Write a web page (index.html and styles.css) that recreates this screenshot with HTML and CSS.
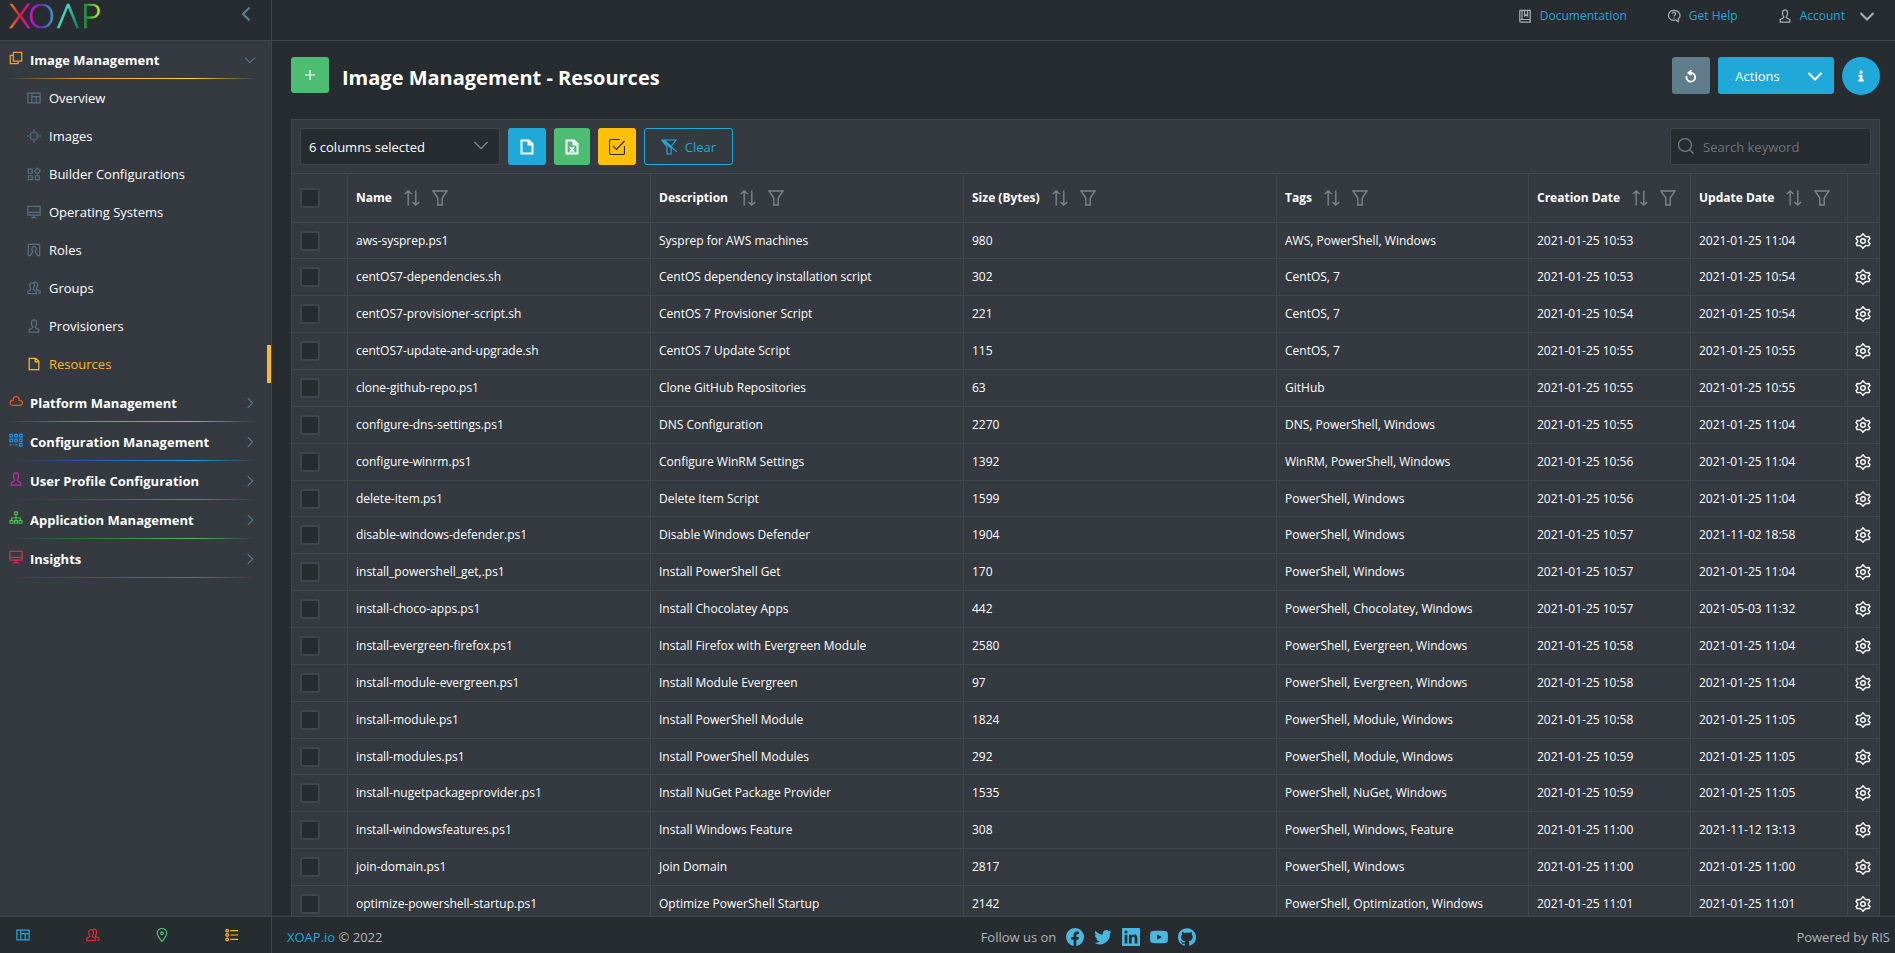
FILE: index.html
```html
<!DOCTYPE html>
<html lang="en">
<head>
	<meta charset="utf-8">
	<title>Image Management - Resources</title>
	<link rel="stylesheet" href="styles.css">
</head>
<body>
	<!-- icon sprite -->
	<svg class="sprite" xmlns="http://www.w3.org/2000/svg">
		<symbol id="i-left" viewBox="0 0 16 16"><path d="M11.5 1.5L5 8l6.500 6.500"/></symbol>
		<symbol id="i-right" viewBox="0 0 16 16"><path d="M5 1.500L11.500 8 5 14.500"/></symbol>
		<symbol id="i-down" viewBox="0 0 16 16"><path d="M1.500 5L8 11.500 14.500 5"/></symbol>
		<symbol id="i-clone" viewBox="0 0 16 16"><path d="M5 1.500h9.500v10H5zM5 5H1.500v9.500h9V11.500"/></symbol>
		<symbol id="i-board" viewBox="0 0 16 16"><path d="M1 2.500h14v11H1zM5.500 2.500v11M5.500 6.500H15M10.500 6.500v7"/></symbol>
		<symbol id="i-target" viewBox="0 0 16 16"><path d="M8 0v5.500M8 10.500V16M0 8h5.500M10.500 8H16M3.500 6.500a5 5 0 0 1 3-3M9.500 3.500a5 5 0 0 1 3 3M12.500 9.500a5 5 0 0 1-3 3M6.500 12.500a5 5 0 0 1-3-3"/></symbol>
		<symbol id="i-blocks" viewBox="0 0 16 16"><path d="M1.500 2.500h4.500V7H1.500zM1.500 10H6v4.500H1.500zM9.500 10H14v4.500H9.500zM11.800 1.200L15.200 4.600 11.800 8 8.400 4.600z"/></symbol>
		<symbol id="i-screen" viewBox="0 0 16 16"><path d="M1 1.500h14v10H1zM1 8.500h14M8 11.500v3M5 14.500h6"/></symbol>
		<symbol id="i-role" viewBox="0 0 16 16"><path d="M4 14.500H1.500v-13h13v13H12M4 14.500c0-3 2.500-2.500 2.500-4.500C5 8 5.200 4 8 4s3 4 1.500 6c0 2 2.500 1.500 2.500 4.500"/></symbol>
		<symbol id="i-user" viewBox="0 0 16 16"><path d="M2.500 15v-2.800l4-2.200V8.800C4.300 6.500 4.500 1 8 1s3.700 5.500 1.500 7.800V10l4 2.200V15z"/></symbol>
		<symbol id="i-users" viewBox="0 0 16 16"><path d="M1 14.500v-2.800L4.300 10V8.800C2.300 6.500 2.600 2 5.800 2S9.300 6.500 7.300 8.800V10l3.200 1.700v2.800zM7.500 2.500C10-.2 14 2 11 8.500V9.700l4 1.800v2.500h-2.500"/></symbol>
		<symbol id="i-file" viewBox="0 0 16 16"><path d="M2.500 1.500h7.500l3.500 3.500v9.500h-11zM9.500 1.500V5.500h4"/></symbol>
		<symbol id="i-excel" viewBox="0 0 16 16"><path d="M2.500 1.500h7.500l3.500 3.500v9.500h-11zM9.500 1.500V5.500h4M6 8l4 5M10 8l-4 5"/></symbol>
		<symbol id="i-cloud" viewBox="0 0 16 16"><path d="M4 13h8.500a2.700 2.700 0 0 0 .3-5.400C12.500 7 11.700 7 11.500 7 12 1.500 4.500 1.500 4.800 7 .3 7 .3 13 4 13z"/></symbol>
		<symbol id="i-nodes" viewBox="0 0 16 16"><path d="M1 1.500h3v3H1zM6.500 1.500h3v3h-3zM12 1.500h3v3h-3zM1 7h3v3H1zM6.500 7h3v3h-3zM12 7h3v3h-3zM12 12h3v3h-3zM1 13.500h2M4.500 13.500h1M7 13.500h3"/></symbol>
		<symbol id="i-tree" viewBox="0 0 16 16"><path d="M6.500 1h3v3h-3zM8 4v6M3 10.500V8h10v2.500M1.200 11h3.300v3H1.200zM6.400 11h3.300v3H6.400zM11.500 11h3.300v3h-3.300z"/></symbol>
		<symbol id="i-book" viewBox="0 0 16 16"><path d="M2 13V2.500C2 1.800 2.500 1.500 3 1.500h11V15H3.500C2.500 15 2 14 2 13.500 2 12.500 2.500 12 3.500 12H14M4.500 1.500V12M7.500 1.500V8L9.200 6.500 11 8V1.500"/></symbol>
		<symbol id="i-help" viewBox="0 0 16 16"><path d="M5 12.500C-1 9 2 1.500 8 1.500c7 0 8.500 7 5 9.500v3.500L10 12.500C8 13 6.500 13 5 12.500M6 5.500c.2-2.500 4.200-2 4 .2C9.900 7 8 7 8 8.600M8 9.800v1.200"/></symbol>
		<symbol id="i-refresh" viewBox="0 0 16 16"><path d="M3 8A5 5 0 1 0 8 4.500L5 4.500M8.500 1.500L5 4.500l3.500 2.500"/></symbol>
		<symbol id="i-plus" viewBox="0 0 16 16"><path d="M8 3v10M3 8h10"/></symbol>
		<symbol id="i-check" viewBox="0 0 16 16"><path d="M11 .5H2A1.500 1.500 0 0 0 .5 2V14A1.500 1.500 0 0 0 2 15.500h12a1.500 1.500 0 0 0 1.500-1.500V7M4 7l3.500 3.500L15.500 2"/></symbol>
		<symbol id="i-filter" viewBox="0 0 16 16"><path d="M1 1h14l-4.800 7v7H5.800V8z"/></symbol>
		<symbol id="i-nofilter" viewBox="0 0 16 16"><path d="M.5 1H15l-4.500 6M10.200 9v6H6V8L.5 1M3 1l13 12M1 1l9 8"/></symbol>
		<symbol id="i-sort" viewBox="0 0 16 16"><path d="M4.200 15.500V1M.8 4l3.400-3 3.400 3M11.800.5V15M8.400 12l3.400 3 3.400-3"/></symbol>
		<symbol id="i-search" viewBox="0 0 16 16"><circle cx="7" cy="7" r="6.500"/><path d="M11.500 11.500L15.800 15.800"/></symbol>
		<symbol id="i-gear" viewBox="0 0 16 16"><path d="M6.300 2.800L8 .8l1.700 2 1.600 1 2.700-.2.900 2.100-1.500 1.600v1.600l1.500 1.600-.9 2.100-2.700-.2-1.600 1L8 15.300l-1.700-1.900-1.600-1-2.700.2-.9-2.100 1.500-1.600V7.300L1.100 5.700l.9-2.100 2.700.2z"/><circle cx="8" cy="8" r="2.300"/></symbol>
		<symbol id="i-pin" viewBox="0 0 16 16"><path d="M8 15.500C5 11 2.500 9 2.500 6a5.500 5.500 0 0 1 11 0c0 3-2.500 5-5.500 9.500z"/><circle cx="8" cy="6" r="1.500"/></symbol>
		<symbol id="i-list" viewBox="0 0 16 16"><path d="M6 3h9M6 8h9M6 13h9"/><circle cx="2.500" cy="3" r="1.500"/><circle cx="2.500" cy="8" r="1.500"/><circle cx="2.500" cy="13" r="1.500"/></symbol>
	</svg>

	<header class="topbar">
		<div class="brand">
			<svg class="logo" viewBox="0 0 96 26" role="img" aria-label="XOAP">
				<defs>
					<linearGradient id="gx"><stop offset="0" stop-color="#f08a1d"/><stop offset=".5" stop-color="#d81e4e"/><stop offset="1" stop-color="#e0c"/></linearGradient>
					<linearGradient id="go"><stop offset="0" stop-color="#f0e"/><stop offset=".5" stop-color="#5a35a8"/><stop offset="1" stop-color="#38b0e0"/></linearGradient>
					<linearGradient id="ga"><stop offset="0" stop-color="#4adfc8"/><stop offset=".5" stop-color="#4adfc8"/><stop offset="1" stop-color="#10702c"/></linearGradient>
					<linearGradient id="gp"><stop offset="0" stop-color="#1d9a3c"/><stop offset=".3" stop-color="#1d9a3c"/><stop offset="1" stop-color="#e6f01e"/></linearGradient>
				</defs>
				<text x="0" y="25" fill="url(#gx)" stroke="url(#gx)">X</text>
				<text x="19" y="25" fill="url(#go)" stroke="url(#go)">O</text>
				<text x="48" y="25" fill="url(#ga)" stroke="url(#ga)">Λ</text>
				<text x="72" y="25" fill="url(#gp)" stroke="url(#gp)">P</text>
			</svg>
			<button class="plain collapse" aria-label="Collapse menu"><svg><use href="#i-left"/></svg></button>
		</div>
		<nav class="toplinks">
			<a href="#"><svg><use href="#i-book"/></svg>Documentation</a>
			<a href="#"><svg><use href="#i-help"/></svg>Get Help</a>
			<a href="#" class="account"><svg><use href="#i-user"/></svg>Account<svg class="caret"><use href="#i-down"/></svg></a>
		</nav>
	</header>

	<div class="page">
		<nav class="sidebar">
			<a href="#" class="group images"><svg><use href="#i-clone"/></svg>Image Management<svg class="arrow"><use href="#i-down"/></svg></a>
			<a href="#" class="item"><svg><use href="#i-board"/></svg>Overview</a>
			<a href="#" class="item"><svg><use href="#i-target"/></svg>Images</a>
			<a href="#" class="item"><svg><use href="#i-blocks"/></svg>Builder Configurations</a>
			<a href="#" class="item"><svg><use href="#i-screen"/></svg>Operating Systems</a>
			<a href="#" class="item"><svg><use href="#i-role"/></svg>Roles</a>
			<a href="#" class="item"><svg><use href="#i-users"/></svg>Groups</a>
			<a href="#" class="item"><svg><use href="#i-user"/></svg>Provisioners</a>
			<a href="#" class="item active"><svg><use href="#i-file"/></svg>Resources</a>
			<a href="#" class="group platform"><svg><use href="#i-cloud"/></svg>Platform Management<svg class="arrow"><use href="#i-right"/></svg></a>
			<a href="#" class="group config"><svg><use href="#i-nodes"/></svg>Configuration Management<svg class="arrow"><use href="#i-right"/></svg></a>
			<a href="#" class="group profile"><svg><use href="#i-user"/></svg>User Profile Configuration<svg class="arrow"><use href="#i-right"/></svg></a>
			<a href="#" class="group apps"><svg><use href="#i-tree"/></svg>Application Management<svg class="arrow"><use href="#i-right"/></svg></a>
			<a href="#" class="group insights"><svg><use href="#i-screen"/></svg>Insights<svg class="arrow"><use href="#i-right"/></svg></a>
		</nav>

		<main class="content">
			<div class="heading">
				<button class="btn green add" aria-label="Add"><svg><use href="#i-plus"/></svg></button>
				<h1>Image Management - Resources</h1>
				<button class="btn grey" aria-label="Refresh"><svg><use href="#i-refresh"/></svg></button>
				<button class="btn blue actions">Actions<svg><use href="#i-down"/></svg></button>
				<button class="btn blue info" aria-label="Info"><svg viewBox="0 0 16 16"><path d="M6.500 2h3.200v3H6.500zM5 6.500h4.700V12H11v2.300H5V12h1.500V8.700H5z"/></svg></button>
			</div>

			<section class="panel">
				<div class="toolbar">
					<div class="columns">
						<select aria-label="Columns"><option>6 columns selected</option></select>
						<svg><use href="#i-down"/></svg>
					</div>
					<button class="btn blue" aria-label="Export CSV"><svg><use href="#i-file"/></svg></button>
					<button class="btn green excel" aria-label="Export Excel"><svg><use href="#i-excel"/></svg></button>
					<button class="btn yellow" aria-label="Export selection"><svg><use href="#i-check"/></svg></button>
					<button class="btn outline"><svg><use href="#i-nofilter"/></svg>Clear</button>
					<div class="search">
						<svg><use href="#i-search"/></svg>
						<input type="text" placeholder="Search keyword" aria-label="Search keyword">
					</div>
				</div>
				<table>
					<colgroup>
						<col class="c-check"><col class="c-name"><col class="c-desc"><col class="c-size"><col class="c-tags"><col class="c-created"><col class="c-updated"><col class="c-gear">
					</colgroup>
					<thead>
						<tr>
							<th><input type="checkbox" aria-label="Select all"></th>
							<th><div>Name<svg><use href="#i-sort"/></svg><svg><use href="#i-filter"/></svg></div></th>
							<th><div>Description<svg><use href="#i-sort"/></svg><svg><use href="#i-filter"/></svg></div></th>
							<th><div>Size (Bytes)<svg><use href="#i-sort"/></svg><svg><use href="#i-filter"/></svg></div></th>
							<th><div>Tags<svg><use href="#i-sort"/></svg><svg><use href="#i-filter"/></svg></div></th>
							<th><div>Creation Date<svg><use href="#i-sort"/></svg><svg><use href="#i-filter"/></svg></div></th>
							<th><div>Update Date<svg><use href="#i-sort"/></svg><svg><use href="#i-filter"/></svg></div></th>
							<th></th>
						</tr>
					</thead>
					<tbody id="rows"></tbody>
				</table>
			</section>
		</main>
	</div>

	<footer class="bottombar">
		<nav class="shortcuts">
			<a href="#" class="s-blue" aria-label="Overview"><svg><use href="#i-board"/></svg></a>
			<a href="#" class="s-red" aria-label="Groups"><svg><use href="#i-users"/></svg></a>
			<a href="#" class="s-green" aria-label="Locations"><svg><use href="#i-pin"/></svg></a>
			<a href="#" class="s-yellow" aria-label="Tasks"><svg><use href="#i-list"/></svg></a>
		</nav>
		<div class="foot">
			<div><a href="#">XOAP.io</a> © 2022</div>
			<div class="social">
				<span>Follow us on</span>
				<a href="#" aria-label="Facebook"><svg viewBox="0 0 24 24"><path d="M24 12a12 12 0 1 0-13.900 11.900v-8.400H7V12h3.100V9.400c0-3 1.800-4.700 4.500-4.700 1.300 0 2.700.2 2.700.2v3h-1.500c-1.500 0-2 .9-2 1.900V12h3.400l-.5 3.500h-2.900v8.400A12 12 0 0 0 24 12z"/></svg></a>
				<a href="#" aria-label="Twitter"><svg viewBox="0 0 24 24"><path d="M23.600 4.900c-.9.400-1.800.7-2.700.8 1-.6 1.700-1.500 2.100-2.600-.9.500-1.900.9-3 1.100a4.800 4.800 0 0 0-8.200 4.400C7.800 8.400 4.300 6.500 1.900 3.600c-1.300 2.200-.7 5 1.500 6.400-.8 0-1.500-.2-2.200-.6 0 2.300 1.600 4.300 3.800 4.800-.7.200-1.400.2-2.100.1.600 1.900 2.400 3.300 4.500 3.300A9.600 9.600 0 0 1 .3 19.600 13.600 13.600 0 0 0 21.200 7.500c1-.7 1.800-1.600 2.400-2.600z"/></svg></a>
				<a href="#" aria-label="LinkedIn"><svg viewBox="0 0 24 24"><path fill-rule="evenodd" d="M1 0h22a1 1 0 0 1 1 1v22a1 1 0 0 1-1 1H1a1 1 0 0 1-1-1V1a1 1 0 0 1 1-1zM3.600 9v11.500h3.500V9zM5.300 3.300a2 2 0 1 0 0 4.100 2 2 0 0 0 0-4.100zM9.300 9v11.500h3.600v-5.700c0-1.500.3-3 2.100-3s1.900 1.700 1.900 3.100v5.600h3.600v-6.300c0-3.100-.7-5.500-4.300-5.500-1.700 0-2.900 1-3.400 1.900V9z"/></svg></a>
				<a href="#" aria-label="YouTube"><svg viewBox="0 0 24 24"><path fill-rule="evenodd" d="M4 4c5-.6 11-.6 16 0 2.500.3 3.500 1.500 3.700 3.500.4 3 .4 6 0 9-.2 2-1.200 3.200-3.700 3.500-5 .6-11 .6-16 0C1.500 19.700.5 18.500.3 16.500c-.4-3-.4-6 0-9C.5 5.500 1.500 4.300 4 4zM9.600 8.500v7L15.800 12z"/></svg></a>
				<a href="#" aria-label="GitHub"><svg viewBox="0 0 24 24"><path d="M12 .3a12 12 0 0 0-3.800 23.400c.6.100.8-.3.800-.6v-2c-3.300.7-4-1.600-4-1.600-.6-1.400-1.400-1.800-1.400-1.800-1-.7.100-.7.100-.7 1.200 0 1.900 1.200 1.900 1.200 1 1.800 2.800 1.300 3.500 1 0-.8.400-1.300.7-1.600-2.700-.3-5.500-1.300-5.500-6 0-1.200.5-2.300 1.300-3.100-.2-.4-.6-1.600 0-3.200 0 0 1-.3 3.400 1.200a11.500 11.500 0 0 1 6 0c2.300-1.500 3.300-1.200 3.300-1.200.6 1.600.2 2.800 0 3.200.9.800 1.300 1.900 1.300 3.200 0 4.600-2.800 5.600-5.500 5.900.5.400.9 1 .9 2.200v3.300c0 .3.100.7.800.6A12 12 0 0 0 12 .3"/></svg></a>
			</div>
			<div class="powered">Powered by RIS</div>
		</div>
	</footer>
	<script src="rows.js"></script>
</body>
</html>
```
FILE: styles.css
```css
*{box-sizing:border-box;}
body{margin:0; height:100vh; display:flex; flex-direction:column; overflow:hidden; background:#272c30; color:#fff; font-family:"Open Sans","Noto Sans",sans-serif; font-size:13px; line-height:20px;}
a{color:#20a8d8; text-decoration:none;}
svg{width:16px; height:16px; flex:none; fill:none; stroke:currentColor; stroke-width:1.4; overflow:visible;}
button,input,select{font:inherit; color:inherit;}
.sprite{position:absolute; width:0; height:0;}

/* top bar */
.topbar{display:flex; height:41px; flex:none; border-bottom:1px solid #3f464c;}
.brand{display:flex; width:272px; border-right:1px solid #3f464c; padding:3px 17px 0 9px; justify-content:space-between; align-items:flex-start;}
.logo{width:96px; height:26px; stroke-width:.6; font-family:Lato,sans-serif; font-weight:300; font-size:34px;}
.plain{background:none; border:0; padding:0; cursor:pointer;}
.collapse{color:#5f7f95; padding-top:3px;}
.collapse svg{stroke-width:2;}
.toplinks{display:flex; flex:1; justify-content:flex-end; align-items:flex-start; padding:6px 20px 0 0; gap:40px; font-size:12px;}
.toplinks a{display:flex; align-items:center; gap:8px;}
.toplinks svg{color:#aab0b5; width:14px; height:14px;}
.toplinks .caret{width:16px; height:16px; margin-left:6px; stroke-width:2;}

/* sidebar */
.page{display:flex; flex:1; min-height:0;}
.sidebar{width:272px; flex:none; background:#343a40; border-right:1px solid #3f464c;}
.sidebar a{display:flex; align-items:center; color:#fff;}
.sidebar .group{position:relative; height:39px; padding:0 15px 0 9px; font-weight:700; gap:7px;}
.sidebar .images{height:38px;}
.group svg{width:14px; height:14px; margin-bottom:4px;}
.group .arrow{width:12px; height:12px; margin:0 0 0 auto; color:#5f7f95;}
.group::after{content:""; position:absolute; left:9px; right:16px; bottom:0; height:1px; background:linear-gradient(90deg,transparent,var(--from) 30%,var(--to) 75%,transparent);}
.item{height:38px; padding-left:27px; gap:8px;}
.item svg{width:14px; height:14px; color:#54707f;}
.sidebar .active,.active svg{color:#ffb72b;}
.active{border-right:4px solid #ffb72b;}
.images{--from:#f0a030; --to:#ffd82c;}
.images>svg:first-child{color:#f0a030;}
.platform{--from:#e8632c; --to:#f59a1c;}
.platform>svg:first-child{color:#e8532c;}
.config{--from:#2c50c0; --to:#12a0e8;}
.config>svg:first-child{color:#1c90e0;}
.profile{--from:#8a1c9c; --to:#e03cb0;}
.profile>svg:first-child{color:#c02cb0;}
.apps{--from:#1c7c34; --to:#50c05c;}
.apps>svg:first-child{color:#48b84c;}
.insights{--from:#a01c78; --to:#f02c6c;}
.insights>svg:first-child{color:#d8305c;}

/* content */
.content{flex:1; min-width:0; padding:16px 15px 0 19px; overflow:hidden;}
.heading{display:flex; align-items:flex-start; gap:8px; height:62px;}
.heading h1{flex:1; margin:6px 0 0 5px; font-size:20px; line-height:30px; font-weight:700;}
.btn{display:flex; align-items:center; justify-content:center; width:38px; height:37px; padding:0; border:0; border-radius:3px; color:#fff; cursor:pointer;}
.btn svg{stroke-width:2;}
.blue{background:#20a8d8;}
.green{background:#4dbd74;}
.grey{background:#607d8b;}
.yellow{background:#ffc107; color:#272c30;}
.yellow svg,.add svg,.outline svg{stroke-width:1.2;}
.add{height:36px;}
.grey svg{width:14px; height:14px;}
.excel{width:36px;}
.actions{width:116px; gap:27px; padding-left:6px;}
.info{height:38px; border-radius:50%;}
.info svg{width:14px; height:14px; fill:#fff; stroke:none;}
.outline{width:89px; gap:8px; background:none; border:1px solid #20a8d8; color:#20a8d8;}

.panel{background:#343a40; border:1px solid #3f464c;}
.toolbar{display:flex; gap:8px; padding:8px; height:53px;}
.columns{position:relative; width:200px;}
.columns select{width:100%; height:37px; appearance:none; background:#272c30; border:1px solid #3f464c; border-radius:3px; padding:0 8px;}
.columns svg{position:absolute; right:11px; top:9px; color:#7d858b; pointer-events:none;}
.search{position:relative; width:201px; margin-left:auto;}
.search input{width:100%; height:37px; background:#272c30; border:1px solid #3f464c; border-radius:3px; padding:0 8px 0 32px;}
.search input::placeholder{color:#6d757b; opacity:1;}
.search svg{position:absolute; left:8px; top:10px; color:#6d757b;}

table{width:100%; table-layout:fixed; border-collapse:separate; border-spacing:0; font-size:12px;}
.c-check{width:55px;}
.c-name{width:303px;}
.c-desc{width:313px;}
.c-size{width:313px;}
.c-tags{width:252px;}
.c-created{width:162px;}
.c-updated{width:157px;}
.c-gear{width:32px;}
th,td{height:37px; padding:0 8px; border-top:1px solid #3f464c; border-left:1px solid #3f464c; text-align:left; white-space:nowrap;}
th:first-child,td:first-child{border-left:0;}
th{height:49px;}
th div{display:flex; align-items:center; gap:12px;}
th svg{color:#7d858b;}
tbody tr:nth-child(7n+1) td{height:36px;}
td:last-child{padding:0 7px;}
td button,td svg{display:block;}
input[type=checkbox]{appearance:none; display:block; width:20px; height:20px; margin:0; background:#272c30; border:2px solid #3f464c; border-radius:3px;}

/* bottom bar */
.bottombar{display:flex; height:37px; flex:none; border-top:1px solid #3f464c; color:#b0b5b9;}
.shortcuts{display:flex; width:272px; padding:11px 32px 0 16px; justify-content:space-between; border-right:1px solid #3f464c;}
.shortcuts svg{display:block; width:14px; height:14px;}
.s-blue{color:#20a8d8;}
.s-red{color:#e02c2c;}
.s-green{color:#4dbd74;}
.s-yellow{color:#ffb72b;}
.foot{display:grid; grid-template-columns:1fr auto 1fr; flex:1; align-items:center; padding:3px 5px 0 15px;}
.social{display:flex; align-items:center; gap:10px;}
.social svg{display:block; width:18px; height:18px; fill:#48b8e0; stroke:none;}
.powered{text-align:right;}
```
FILE: rows.js
```js
var rows=[
	['aws-sysprep.ps1','Sysprep for AWS machines','980','AWS, PowerShell, Windows','2021-01-25 10:53','2021-01-25 11:04'],
	['centOS7-dependencies.sh','CentOS dependency installation script','302','CentOS, 7','2021-01-25 10:53','2021-01-25 10:54'],
	['centOS7-provisioner-script.sh','CentOS 7 Provisioner Script','221','CentOS, 7','2021-01-25 10:54','2021-01-25 10:54'],
	['centOS7-update-and-upgrade.sh','CentOS 7 Update Script','115','CentOS, 7','2021-01-25 10:55','2021-01-25 10:55'],
	['clone-github-repo.ps1','Clone GitHub Repositories','63','GitHub','2021-01-25 10:55','2021-01-25 10:55'],
	['configure-dns-settings.ps1','DNS Configuration','2270','DNS, PowerShell, Windows','2021-01-25 10:55','2021-01-25 11:04'],
	['configure-winrm.ps1','Configure WinRM Settings','1392','WinRM, PowerShell, Windows','2021-01-25 10:56','2021-01-25 11:04'],
	['delete-item.ps1','Delete Item Script','1599','PowerShell, Windows','2021-01-25 10:56','2021-01-25 11:04'],
	['disable-windows-defender.ps1','Disable Windows Defender','1904','PowerShell, Windows','2021-01-25 10:57','2021-11-02 18:58'],
	['install_powershell_get,.ps1','Install PowerShell Get','170','PowerShell, Windows','2021-01-25 10:57','2021-01-25 11:04'],
	['install-choco-apps.ps1','Install Chocolatey Apps','442','PowerShell, Chocolatey, Windows','2021-01-25 10:57','2021-05-03 11:32'],
	['install-evergreen-firefox.ps1','Install Firefox with Evergreen Module','2580','PowerShell, Evergreen, Windows','2021-01-25 10:58','2021-01-25 11:04'],
	['install-module-evergreen.ps1','Install Module Evergreen','97','PowerShell, Evergreen, Windows','2021-01-25 10:58','2021-01-25 11:04'],
	['install-module.ps1','Install PowerShell Module','1824','PowerShell, Module, Windows','2021-01-25 10:58','2021-01-25 11:05'],
	['install-modules.ps1','Install PowerShell Modules','292','PowerShell, Module, Windows','2021-01-25 10:59','2021-01-25 11:05'],
	['install-nugetpackageprovider.ps1','Install NuGet Package Provider','1535','PowerShell, NuGet, Windows','2021-01-25 10:59','2021-01-25 11:05'],
	['install-windowsfeatures.ps1','Install Windows Feature','308','PowerShell, Windows, Feature','2021-01-25 11:00','2021-11-12 13:13'],
	['join-domain.ps1','Join Domain','2817','PowerShell, Windows','2021-01-25 11:00','2021-01-25 11:00'],
	['optimize-powershell-startup.ps1','Optimize PowerShell Startup','2142','PowerShell, Optimization, Windows','2021-01-25 11:01','2021-01-25 11:01']
];

var html='';
for(var i=0; i<rows.length; i++){
	html+='<tr><td><input type="checkbox" aria-label="Select '+rows[i][0]+'"></td>';
	for(var j=0; j<rows[i].length; j++){
		html+='<td>'+rows[i][j]+'</td>';
	}
	html+='<td><button class="plain" aria-label="Settings"><svg><use href="#i-gear"/></svg></button></td></tr>';
}
document.getElementById('rows').innerHTML=html;
```
